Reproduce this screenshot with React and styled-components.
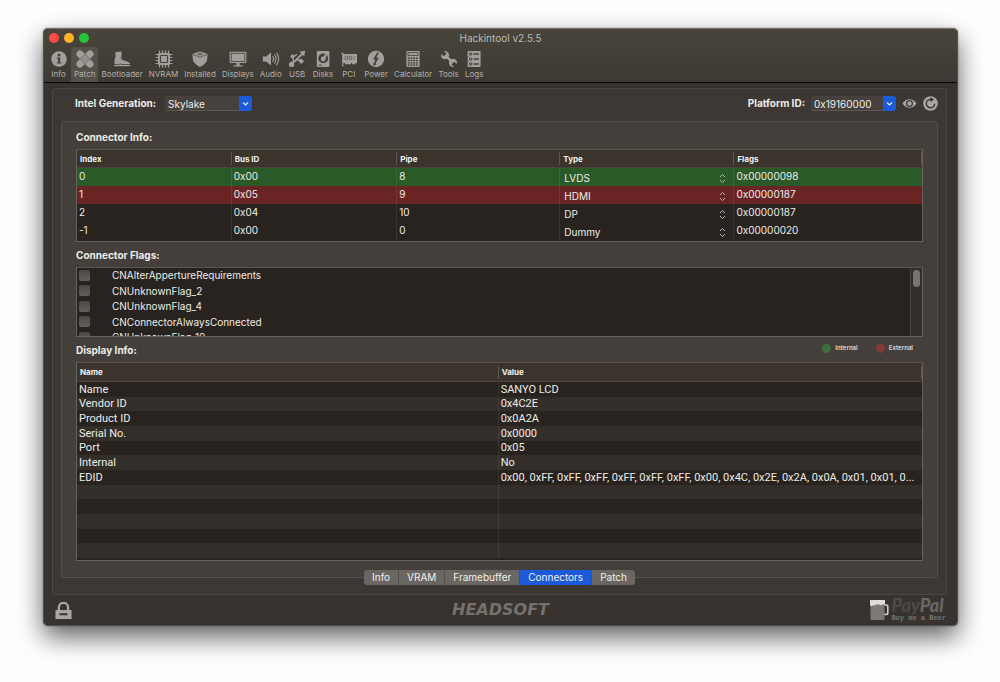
import React from "react";
import styled, { createGlobalStyle, css } from "styled-components";

const Global = createGlobalStyle`
  *, *::before, *::after { box-sizing: border-box; }
  body {
    margin: 0;
    background: #fefefe;
    color: #eeece8;
    font-family: Inter, "Liberation Sans", sans-serif;
    font-size: 10px;
    font-weight: 400;
    line-height: 14px;
  }
  button, select, input { font: inherit; color: inherit; }
`;

const Page = styled.div`
  padding: 28px 42px 56px 43px;
`;

const Window = styled.main`
  border-radius: 5px;
  overflow: hidden;
  background: #38332e;
  border: 1px solid #54504a;
  border-top-color: #75726b;
  box-shadow: 0 0 2px rgba(0, 0, 0, 0.4), 0 11px 26px rgba(0, 0, 0, 0.62);
`;

const Header = styled.header`
  background: linear-gradient(#49453c, #3d3934);
  border-bottom: 1px solid #080706;
`;

const TitleBar = styled.div`
  display: grid;
  grid-template-columns: 1fr auto 1fr;
  align-items: center;
  height: 18px;
  padding: 0 5px;
`;

const Lights = styled.div`
  display: flex;
  gap: 5px;
`;

const Light = styled.button`
  width: 10px;
  height: 10px;
  padding: 0;
  border: 0;
  border-radius: 50%;
  background: ${(p) => p.$color};
`;

const Title = styled.h1`
  margin: 0;
  font-size: 10px;
  font-weight: 400;
  color: #bdbab5;
`;

const Toolbar = styled.nav`
  display: flex;
  height: 35px;
  padding-left: 2px;
`;

const Tool = styled.button`
  display: flex;
  flex-direction: column;
  align-items: center;
  min-width: 25px;
  padding: 2px 3px 0;
  border: 0;
  border-radius: 3px 3px 0 0;
  background: ${(p) => (p.$active ? "#555149" : "transparent")};
  color: #a19f9b;
  font-size: 8px;
  line-height: 10px;
  svg { display: block; flex: none; width: 20px; height: 20px; margin: 0 -2px; }
`;

const ToolLabel = styled.span`
  color: #b3b0ab;
`;

const Body = styled.div`
  padding: 5px 10px 0 8px;
`;

const OuterPanel = styled.section`
  border: 1px solid #4c4742;
  border-radius: 3px;
  background: #3d3833;
  padding: 0 8px 9px;
`;

const Choices = styled.div`
  display: flex;
  align-items: center;
  justify-content: space-between;
  height: 32px;
  padding: 0 0 4px 14px;
`;

const Field = styled.div`
  display: flex;
  align-items: center;
  gap: ${(p) => p.$gap}px;
`;

const FieldLabel = styled.label`
  font-weight: 700;
`;

const Combo = styled.span`
  display: flex;
  position: relative;
  width: ${(p) => p.$width}px;
  height: 15px;
  svg {
    position: absolute;
    right: 0;
    top: 0;
    width: 13px;
    height: 15px;
    border-radius: 0 3px 3px 0;
    background: #1b5bd6;
    pointer-events: none;
  }
`;

const ComboSelect = styled.select`
  appearance: none;
  width: 100%;
  height: 15px;
  padding: 0 14px 0 2px;
  border: 1px solid #47423d;
  border-bottom-color: #5c5751;
  border-radius: 0 3px 3px 0;
  background: #46413c;
`;

const IconButton = styled.button`
  display: flex;
  padding: 0;
  border: 0;
  background: none;
  color: #aaa7a3;
  svg { display: block; width: ${(p) => p.$size || 15}px; height: ${(p) => p.$size || 15}px; }
`;

const InnerPanel = styled.section`
  border: 1px solid #544f4a;
  border-radius: 3px;
  background: #443f3a;
  padding: 2px 14px 16px;
`;

const SectionHead = styled.div`
  display: flex;
  align-items: center;
  justify-content: space-between;
  height: 25px;
`;

const SectionTitle = styled.h2`
  margin: 0;
  font-size: 10px;
  font-weight: 700;
`;

const Frame = styled.div`
  border: 1px solid #67625c;
  border-top-color: #5a554e;
  background: #28231f;
  overflow: hidden;
  padding-bottom: ${(p) => p.$bottom || 0}px;
`;

const Table = styled.table`
  width: 100%;
  table-layout: fixed;
  border-collapse: separate;
  border-spacing: 0;
  ${(p) => p.$height && css`height: ${p.$height}px;`}
`;

const Th = styled.th`
  width: ${(p) => p.$width};
  height: ${(p) => p.$height || 18}px;
  padding: 0 3px;
  text-align: left;
  font-size: 8px;
  line-height: 12px;
  font-weight: 700;
  color: #f2f0ed;
  background:
    linear-gradient(#5b564e, #5b564e) right center / 1px 13px no-repeat,
    #3a342d;
  border-bottom: 1px solid #4a443c;
`;

const rowColors = { internal: "#2a5a27", external: "#6a2423", none: "transparent" };

const ConnectorRow = styled.tr`
  height: 18px;
  background: ${(p) => rowColors[p.$kind]};
`;

const Td = styled.td`
  padding: 0 0 0 2px;
  overflow: hidden;
  white-space: nowrap;
  text-overflow: ellipsis;
  border-right: 1px solid rgba(255, 255, 255, 0.08);
  &:last-child { border-right: 0; }
`;

const PlainCell = styled(Td)`
  padding-bottom: 2px;
`;

const TypeCell = styled(Td)`
  padding: 2px 7px 0 4px;
`;

const TypePicker = styled.span`
  display: flex;
  position: relative;
  align-items: center;
  height: 14px;
  svg { position: absolute; right: 0; top: 2px; width: 7px; height: 11px; pointer-events: none; }
`;

const TypeSelect = styled.select`
  appearance: none;
  width: 100%;
  height: 14px;
  padding: 0;
  border: 0;
  background: transparent;
`;

const FlagFrame = styled(Frame)`
  display: flex;
  height: 70px;
`;

const FlagList = styled.ul`
  flex: 1;
  display: grid;
  grid-template-rows: repeat(5, 1fr);
  height: 78px;
  margin: 0;
  padding: 0 0 0 2px;
  list-style: none;
`;

const FlagLabel = styled.label`
  display: flex;
  align-items: center;
  gap: 22px;
`;

const Check = styled.input`
  appearance: none;
  width: 11px;
  height: 11px;
  margin: 0;
  border-radius: 2px;
  background: linear-gradient(#4d4843, #65605b);
`;

const ScrollTrack = styled.div`
  width: 12px;
  padding: 2px;
  border-left: 1px solid #4a4540;
  background: #332e2a;
`;

const ScrollThumb = styled.div`
  width: 7px;
  height: 17px;
  border-radius: 4px;
  background: #78746f;
`;

const Legend = styled.div`
  display: flex;
  gap: 18px;
  padding: 0 10px 3px 0;
`;

const LegendItem = styled.span`
  display: flex;
  align-items: center;
  gap: 4px;
  font-size: 6px;
  font-weight: 700;
  line-height: 10px;
  color: #cfccc8;
  &::before {
    content: "";
    width: 9px;
    height: 9px;
    border-radius: 50%;
    background: ${(p) => p.$color};
  }
`;

const InfoRow = styled.tr`
  font-family: Roboto, Inter, sans-serif;
  font-size: 11px;
  line-height: 13px;
  &:nth-child(even) { background: #332e2a; }
`;

const Tabs = styled.div`
  display: flex;
  justify-content: center;
  position: relative;
  margin-top: -8px;
`;

const Tab = styled.button`
  height: 15px;
  padding: 0 8px;
  border: 0;
  border-right: 1px solid #54504c;
  background: ${(p) => (p.$active ? "#1a5adb" : "#6a6662")};
  color: #f3f1ef;
  line-height: 15px;
  &:first-child { border-radius: 3px 0 0 3px; }
  &:last-child { border-radius: 0 3px 3px 0; border-right: 0; }
`;

const Footer = styled.footer`
  display: grid;
  grid-template-columns: 1fr auto 1fr;
  align-items: center;
  height: 30px;
  padding: 0 11px;
`;

const Brand = styled.span`
  font-family: "DejaVu Sans", sans-serif;
  font-size: 16px;
  font-weight: 700;
  font-style: italic;
  line-height: 16px;
  color: #74716e;
`;

const Donate = styled.a`
  display: flex;
  justify-self: end;
  align-items: center;
  gap: 2px;
  text-decoration: none;
`;

const DonateText = styled.span`
  display: flex;
  flex-direction: column;
  font-family: "Liberation Mono", monospace;
  font-size: 7px;
  font-weight: 700;
  line-height: 8px;
  color: #767370;
`;

const PayPal = styled.span`
  font-family: Lato, "Liberation Sans", sans-serif;
  font-size: 18px;
  font-style: italic;
  font-weight: 900;
  line-height: 14px;
  color: ${(p) => p.$color};
`;

const D = "#45413a";

const icons = {
  Info: (
    <>
      <circle cx="10" cy="10" r="7.8" fill="currentColor" />
      <circle cx="10" cy="6" r="1.5" fill={D} />
      <path d="M7.8 8.6h3.3v4.8h1.3v1.2H7.7v-1.2H9V9.8H7.8z" fill={D} />
    </>
  ),
  Patch: (
    <>
      <rect x="-0.6" y="6.6" width="21.2" height="6.8" rx="3.2" transform="rotate(-45 10 10)" fill="currentColor" />
      <rect x="-0.6" y="6.6" width="21.2" height="6.8" rx="3.2" transform="rotate(45 10 10)" fill="currentColor" />
      <path d="M10 5.2 14.8 10 10 14.8 5.2 10z" fill="none" stroke="#615d57" strokeWidth="0.8" />
      <path d="M10 7.6v.9M7.6 10h.9M10 9.6v.9M12 10h.9M10 11.8v.9M8.6 8.8h.7M11 8.8h.7M8.6 11.4h.7M11 11.4h.7" stroke="#615d57" strokeWidth="0.8" />
    </>
  ),
  Bootloader: (
    <>
      <path d="M3.2 3.2 9.2 2.6l.5 2-.4 3.6 1.2 2.7 4.6 1.6c1.8.5 2.8 1.3 3 2.7H9.4L8 14.2l-.8 1H2.4l.3-4.6 1-3.4z" fill="currentColor" />
      <path d="M2.3 16h4.8l.9-.9 1.3.9h8.8v1.2H8.8l-.9-.4-.7.4H2.3z" fill="currentColor" />
      <path d="M8.2 8.6h1.6M8.8 10.4h1.6" stroke={D} strokeWidth="0.6" />
    </>
  ),
  NVRAM: (
    <>
      <rect x="4" y="4" width="12" height="12" rx="1" fill="currentColor" />
      <rect x="6.5" y="6.5" width="7" height="7" rx="0.8" fill="none" stroke={D} strokeWidth="1.1" />
      <path d="M5.5 1.6v2.6M8.5 1.6v2.6M11.5 1.6v2.6M14.5 1.6v2.6M5.5 15.8v2.6M8.5 15.8v2.6M11.5 15.8v2.6M14.5 15.8v2.6M1.6 5.5h2.6M1.6 8.5h2.6M1.6 11.5h2.6M1.6 14.5h2.6M15.8 5.5h2.6M15.8 8.5h2.6M15.8 11.5h2.6M15.8 14.5h2.6" stroke="currentColor" strokeWidth="1.2" />
    </>
  ),
  Installed: (
    <>
      <path d="M2.4 5 10 2.4 17.6 5l-.5 5.8c-.4 3-3.6 5.4-7.1 7.2-3.5-1.8-6.7-4.2-7.1-7.2z" fill="currentColor" />
      <path d="M2.6 5.4 10 8.2l7.4-2.8" fill="none" stroke={D} strokeWidth="0.7" />
      <path d="M7.6 5.2 10 4.2l2.4 1L10 6.2z" fill="none" stroke={D} strokeWidth="0.8" />
    </>
  ),
  Displays: (
    <>
      <rect x="1.6" y="2.8" width="16.8" height="11.2" rx="0.8" fill="currentColor" />
      <rect x="3.2" y="4.3" width="13.6" height="8.2" fill="none" stroke={D} strokeWidth="0.8" />
      <path d="M8.4 14h3.2v2.2h3v1.4H5.4v-1.4h3z" fill="currentColor" />
    </>
  ),
  Audio: (
    <>
      <path d="M1.8 7.4h3.4l4.8-4v13.2l-4.8-4H1.8z" fill="currentColor" />
      <path d="M11.8 7.6c1 1.3 1 3.5 0 4.8M13.6 5.8c1.9 2.3 1.9 6.1 0 8.4M15.6 4.2c2.7 3.2 2.7 8.4 0 11.6" fill="none" stroke="currentColor" strokeWidth="1.1" strokeLinecap="round" />
    </>
  ),
  USB: (
    <>
      <circle cx="4.6" cy="15.4" r="2.7" fill="currentColor" />
      <path d="M4.6 15.4 16 4" stroke="currentColor" strokeWidth="1.8" />
      <path d="M18.2 1.8 17.2 7.4l-4.6-4.6z" fill="currentColor" />
      <path d="M6.2 13.6 6.4 8M6.4 8 9.8 5.4M9 11h4l1.6 1" fill="none" stroke="currentColor" strokeWidth="1.4" />
      <circle cx="5.4" cy="7.4" r="1.9" fill="currentColor" />
      <rect x="12.4" y="10.4" width="3.8" height="3.8" fill="currentColor" transform="rotate(-40 14.3 12.3)" />
    </>
  ),
  Disks: (
    <>
      <rect x="3.8" y="2" width="12.6" height="16" rx="1.2" fill="currentColor" />
      <circle cx="10.2" cy="9.4" r="4.9" fill={D} />
      <circle cx="10.2" cy="10" r="2.4" fill="currentColor" />
      <path d="M10 8.6 13.4 3.6l1 .6-2.2 6z" fill="currentColor" />
      <path d="M5.8 16.2h3.2" stroke={D} strokeWidth="0.9" />
    </>
  ),
  PCI: (
    <>
      <path d="M2.2 3.8h2.2V5H18v9H4.4v3.4H3.2V5h-1z" fill="currentColor" />
      <path d="M6 14h6v1.2H6zM13 14h3.5v1.2H13z" fill="currentColor" />
      <path d="M6.2 7.4h2.8v3H6.2zM10.6 7.4h2.2v3h-2.2zM15.2 7.2v3.6" fill="none" stroke="#5a564f" strokeWidth="0.7" />
    </>
  ),
  Power: (
    <>
      <circle cx="10" cy="10" r="8.2" fill="currentColor" />
      <path d="M11.4 3.2 7 10.4l2.4.2-1.4 3.6-1-.4.8 3.4 2.6-2.2-1-.4L12.8 9l-2.4-.2 2.4-5z" fill={D} />
    </>
  ),
  Calculator: (
    <>
      <rect x="3.4" y="2" width="13.2" height="16" rx="1" fill="currentColor" />
      <rect x="5" y="3.7" width="10" height="2.8" fill="none" stroke={D} strokeWidth="0.8" />
      {[8.4, 10.8, 13.2, 15.4].map((y) =>
        [4.8, 7.5, 10.2, 12.9].map((x) => (
          <rect key={`${x}-${y}`} x={x} y={y} width="1.9" height="1.4" fill={D} />
        ))
      )}
    </>
  ),
  Tools: (
    <>
      <path d="M6.2 6.2 13.8 13.8" stroke="currentColor" strokeWidth="2.4" />
      <path d="M4.8 2.2a4.1 4.1 0 1 1-2.7 2.7l2.4 2 2.2-.7.5-2.1z" fill="currentColor" />
      <path d="M15.2 17.8a4.1 4.1 0 1 1 2.7-2.7l-2.4-2-2.2.7-.5 2.1z" fill="currentColor" />
    </>
  ),
  Logs: (
    <>
      <rect x="3.6" y="2" width="13" height="16" rx="0.8" fill="currentColor" />
      <path d="M5.6 4h2.2v2H5.6zM5.6 9h2.2v2H5.6zM5.6 14h2.2v2H5.6z" fill="none" stroke={D} strokeWidth="0.9" />
      <path d="M9.6 5h5.2M9.6 10h5.2M9.6 15h5.2" stroke={D} strokeWidth="1.3" />
      <path d="M3 7.5h1.6M3 12.5h1.6" stroke={D} strokeWidth="0.7" />
    </>
  ),
};

const connectors = [
  { index: "0", bus: "0x00", pipe: "8", type: "LVDS", flags: "0x00000098", kind: "internal" },
  { index: "1", bus: "0x05", pipe: "9", type: "HDMI", flags: "0x00000187", kind: "external" },
  { index: "2", bus: "0x04", pipe: "10", type: "DP", flags: "0x00000187", kind: "none" },
  { index: "-1", bus: "0x00", pipe: "0", type: "Dummy", flags: "0x00000020", kind: "none" },
];

const flags = [
  "CNAlterAppertureRequirements",
  "CNUnknownFlag_2",
  "CNUnknownFlag_4",
  "CNConnectorAlwaysConnected",
  "CNUnknownFlag_10",
];

const display = [
  ["Name", "SANYO LCD"],
  ["Vendor ID", "0x4C2E"],
  ["Product ID", "0x0A2A"],
  ["Serial No.", "0x0000"],
  ["Port", "0x05"],
  ["Internal", "No"],
  ["EDID", "0x00, 0xFF, 0xFF, 0xFF, 0xFF, 0xFF, 0xFF, 0x00, 0x4C, 0x2E, 0x2A, 0x0A, 0x01, 0x01, 0..."],
  ["", ""],
  ["", ""],
  ["", ""],
  ["", ""],
  ["", ""],
];

function ComboBox({ id, value, width }) {
  return (
    <Combo $width={width}>
      <ComboSelect id={id} defaultValue={value}>
        <option>{value}</option>
      </ComboSelect>
      <svg viewBox="0 0 13 15" aria-hidden="true">
        <path d="M4 6.5 6.5 9 9 6.5" fill="none" stroke="#e6ecfa" strokeWidth="1.2" />
      </svg>
    </Combo>
  );
}

export default function App() {
  return (
    <Page>
      <Global />
      <Window>
        <Header>
          <TitleBar>
            <Lights>
              <Light $color="#ff4b45" aria-label="Close" />
              <Light $color="#fdb325" aria-label="Minimize" />
              <Light $color="#27c33c" aria-label="Zoom" />
            </Lights>
            <Title>Hackintool v2.5.5</Title>
          </TitleBar>
          <Toolbar>
            {Object.entries(icons).map(([name, drawing]) => (
              <Tool key={name} $active={name === "Patch"}>
                <svg viewBox="0 0 20 20" aria-hidden="true">{drawing}</svg>
                <ToolLabel>{name}</ToolLabel>
              </Tool>
            ))}
          </Toolbar>
        </Header>
        <Body>
          <OuterPanel>
            <Choices>
              <Field $gap={9}>
                <FieldLabel htmlFor="generation">Intel Generation:</FieldLabel>
                <ComboBox id="generation" value="Skylake" width={87} />
              </Field>
              <Field $gap={6}>
                <FieldLabel htmlFor="platform">Platform ID:</FieldLabel>
                <ComboBox id="platform" value="0x19160000" width={85} />
                <IconButton aria-label="Show">
                  <svg viewBox="0 0 15 15" aria-hidden="true">
                    <path d="M.5 7.5C4 1.8 11 1.8 14.5 7.5 11 13.2 4 13.2.5 7.5z" fill="currentColor" />
                    <circle cx="7.5" cy="7.5" r="2.9" fill="none" stroke="#3d3833" strokeWidth="1.3" />
                  </svg>
                </IconButton>
                <IconButton aria-label="Refresh">
                  <svg viewBox="0 0 15 15" aria-hidden="true">
                    <circle cx="7.5" cy="7.5" r="7.3" fill="currentColor" />
                    <path d="M11.7 7.8A4.2 4.2 0 1 1 8 3.4" fill="none" stroke="#3d3833" strokeWidth="1.4" />
                    <path d="M7.4 1.2 11.2 3.4 7.4 6z" fill="#3d3833" />
                  </svg>
                </IconButton>
              </Field>
            </Choices>
            <InnerPanel>
              <SectionHead>
                <SectionTitle>Connector Info:</SectionTitle>
              </SectionHead>
              <Frame $bottom={1}>
                <Table>
                  <thead>
                    <tr>
                      <Th $width="18.3%">Index</Th>
                      <Th $width="19.6%">Bus ID</Th>
                      <Th $width="19.3%">Pipe</Th>
                      <Th $width="20.6%">Type</Th>
                      <Th $width="22.2%">Flags</Th>
                    </tr>
                  </thead>
                  <tbody>
                    {connectors.map((c) => (
                      <ConnectorRow key={c.index} $kind={c.kind}>
                        <PlainCell>{c.index}</PlainCell>
                        <PlainCell>{c.bus}</PlainCell>
                        <PlainCell>{c.pipe}</PlainCell>
                        <TypeCell>
                          <TypePicker>
                            <TypeSelect aria-label={`Type of connector ${c.index}`} defaultValue={c.type}>
                              <option>{c.type}</option>
                            </TypeSelect>
                            <svg viewBox="0 0 7 11" aria-hidden="true">
                              <path d="M1 4 3.5 1.5 6 4M1 7 3.5 9.5 6 7" fill="none" stroke="#b5b2ae" />
                            </svg>
                          </TypePicker>
                        </TypeCell>
                        <PlainCell>{c.flags}</PlainCell>
                      </ConnectorRow>
                    ))}
                  </tbody>
                </Table>
              </Frame>
              <SectionHead>
                <SectionTitle>Connector Flags:</SectionTitle>
              </SectionHead>
              <FlagFrame>
                <FlagList>
                  {flags.map((name) => (
                    <li key={name}>
                      <FlagLabel>
                        <Check type="checkbox" />
                        {name}
                      </FlagLabel>
                    </li>
                  ))}
                </FlagList>
                <ScrollTrack>
                  <ScrollThumb />
                </ScrollTrack>
              </FlagFrame>
              <SectionHead>
                <SectionTitle>Display Info:</SectionTitle>
                <Legend>
                  <LegendItem $color="#3c6f3b">Internal</LegendItem>
                  <LegendItem $color="#803a37">External</LegendItem>
                </Legend>
              </SectionHead>
              <Frame $bottom={2}>
                <Table $height={195}>
                  <thead>
                    <tr>
                      <Th $width="49.9%" $height={19}>Name</Th>
                      <Th $width="50.1%" $height={19}>Value</Th>
                    </tr>
                  </thead>
                  <tbody>
                    {display.map(([name, value], i) => (
                      <InfoRow key={i}>
                        <Td>{name || "\u00a0"}</Td>
                        <Td>{value || "\u00a0"}</Td>
                      </InfoRow>
                    ))}
                  </tbody>
                </Table>
              </Frame>
            </InnerPanel>
            <Tabs>
              {["Info", "VRAM", "Framebuffer", "Connectors", "Patch"].map((name) => (
                <Tab key={name} $active={name === "Connectors"}>{name}</Tab>
              ))}
            </Tabs>
          </OuterPanel>
        </Body>
        <Footer>
          <IconButton $size={17} aria-label="Lock">
            <svg viewBox="0 0 18 18" aria-hidden="true">
              <path d="M4.1 9V5.8a4.9 4.9 0 0 1 9.8 0V9" fill="none" stroke="currentColor" strokeWidth="2.4" />
              <path d="M.5 8.4h17V18H.5zM4.7 12v2h8.6v-2z" fill="currentColor" fillRule="evenodd" />
            </svg>
          </IconButton>
          <Brand>HEADSOFT</Brand>
          <Donate href="#donate">
            <svg width="19" height="20" viewBox="0 0 19 20" aria-hidden="true">
              <path d="M14 5h2.6q1.2 0 1.2 1.2v7q0 1.2-1.2 1.2H14" fill="none" stroke="#cfcdca" strokeWidth="1.6" />
              <rect x="0.5" y="3" width="14" height="17" rx="1.5" fill="#7c7a78" />
              <path d="M0 0h15v4.6h-3l-1 .8-1.6-.8H6l-1 1-2-.4-1.4 1L0 5.6z" fill="#dedcda" />
            </svg>
            <DonateText>
              <span>
                <PayPal $color="#4b4a49">Pay</PayPal>
                <PayPal $color="#686766">Pal</PayPal>
              </span>
              Buy me a Beer
            </DonateText>
          </Donate>
        </Footer>
      </Window>
    </Page>
  );
}
